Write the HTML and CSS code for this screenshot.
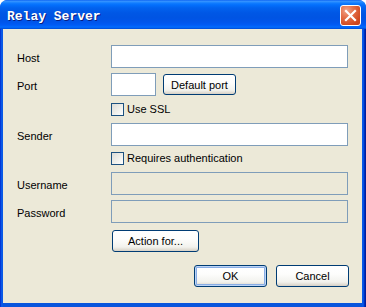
FILE: index.html
```html
<!DOCTYPE html>
<html>
<head>
<meta charset="utf-8">
<link rel="stylesheet" href="styles.css">
</head>
<body>
<div class="window">
  <div class="titlebar">
    <span class="title">Relay Server</span>
    <div class="close">
      <svg width="13" height="13" viewBox="0 0 13 13"><path d="M2 2 L11 11 M11 2 L2 11" stroke="#fff" stroke-width="2.2" stroke-linecap="square"/></svg>
    </div>
  </div>
  <div class="client">
    <div class="row r-host"><span class="label">Host</span><div class="field"></div></div>
    <div class="row r-port"><span class="label">Port</span><div class="field port"></div><div class="btn btn-default">Default port</div></div>
    <div class="row r-check"><span class="label"></span><span class="checkbox"></span><span class="ctext">Use SSL</span></div>
    <div class="row r-field"><span class="label">Sender</span><div class="field"></div></div>
    <div class="row r-check2"><span class="label"></span><span class="checkbox"></span><span class="ctext">Requires authentication</span></div>
    <div class="row r-field"><span class="label">Username</span><div class="field disabled"></div></div>
    <div class="row r-pass"><span class="label">Password</span><div class="field disabled"></div></div>
    <div class="row r-action"><span class="label"></span><div class="btn btn-action">Action for...</div></div>
    <div class="row r-buttons"><div class="btn btn-ok">OK</div><div class="btn btn-cancel">Cancel</div></div>
  </div>
</div>
</body>
</html>
```

FILE: styles.css
```css
html, body {
  margin: 0;
  padding: 0;
  background: #ffffff;
}
body {
  width: 366px;
  height: 307px;
  overflow: hidden;
  font-family: "Liberation Sans", Arial, sans-serif;
  font-size: 11px;
  color: #000;
}
.window {
  width: 366px;
  height: 307px;
  box-sizing: border-box;
  background: linear-gradient(to right, #0019cf 0, #0855dd 1px, #0a5cf0 2px, #0855dd 3px, #0855dd calc(100% - 4px), #0a5cf0 calc(100% - 3px), #0044d9 calc(100% - 2px), #001ea0 calc(100% - 1px));
  border-radius: 8px 8px 0 0;
  display: flex;
  flex-direction: column;
  position: relative;
}
.titlebar {
  height: 29px;
  flex: none;
  border-radius: 7px 7px 0 0;
  background: linear-gradient(to bottom, #0058ee 0, #3a93ff 1px, #288eff 2px, #127dff 3px, #036ffc 5px, #0262ee 8px, #0057e5 13px, #0054e3 18px, #0055eb 22px, #005bf5 25px, #026afe 27px, #0062ef 28px, #0043cf 29px);
  display: flex;
  align-items: flex-start;
  justify-content: space-between;
  padding: 0 5px 0 7px;
  box-sizing: border-box;
}
.title {
  font-family: "Liberation Mono", "DejaVu Sans Mono", monospace;
  font-weight: bold;
  font-size: 13px;
  color: #fff;
  line-height: 13px;
  margin-top: 10px;
  text-shadow: 1px 1px 0 #0a1e82;
}
.close {
  width: 21px;
  height: 21px;
  margin-top: 5px;
  box-sizing: border-box;
  border: 1px solid #fff;
  border-radius: 3px;
  background: radial-gradient(circle at 30% 25%, #f0a48a 0, #e5714b 35%, #d1491f 75%, #c2401c 100%);
  display: flex;
  align-items: center;
  justify-content: center;
}
.close svg { display: block; }
.client {
  flex: 1;
  margin: 0 4px 4px 3px;
  background: #ece9d8;
  padding: 16px 14px 0 14px;
  box-sizing: border-box;
  display: flex;
  flex-direction: column;
}
.row {
  display: flex;
  align-items: center;
  flex: none;
}
.label {
  width: 94px;
  flex: none;
  padding-top: 3px;
  box-sizing: border-box;
}
.field {
  flex: 1;
  height: 23px;
  box-sizing: border-box;
  border: 1px solid #7f9db9;
  background: #fff;
}
.field.port {
  flex: none;
  width: 45px;
}
.field.disabled {
  background: #ece9d8;
}
.r-host { height: 23px; }
.r-port { height: 23px; margin-top: 5px; }
.r-check { height: 13px; margin-top: 7px; }
.r-field { height: 23px; margin-top: 7px; }
.r-check2 { height: 13px; margin-top: 6px; }
.r-pass { height: 23px; margin-top: 5px; }
.r-action { height: 22px; margin-top: 7px; }
.r-buttons { height: 22px; margin-top: 13px; justify-content: flex-end; gap: 9px; margin-right: -1px; }
.checkbox {
  width: 13px;
  height: 13px;
  box-sizing: border-box;
  border: 1px solid #1c5180;
  background: linear-gradient(135deg, #dcdcd7 0, #eeeee9 50%, #ffffff 100%);
  flex: none;
}
.ctext {
  margin-left: 3px;
  line-height: 13px;
}
.btn {
  height: 21px;
  box-sizing: border-box;
  border: 1px solid #003c74;
  border-radius: 3px;
  background: linear-gradient(to bottom, #ffffff 0, #fdfdfc 40%, #f2f2ed 80%, #d6d0c5 100%);
  display: flex;
  align-items: center;
  justify-content: center;
  flex: none;
}
.btn-default { width: 73px; margin-left: 7px; }
.btn-action { width: 87px; margin-left: 1px; height: 22px; }
.btn-ok {
  width: 73px;
  height: 22px;
  box-shadow: inset 0 0 0 1px #bcd4f6, inset 0 0 0 2px #89ade4;
}
.btn-cancel { width: 73px; height: 22px; }
```
